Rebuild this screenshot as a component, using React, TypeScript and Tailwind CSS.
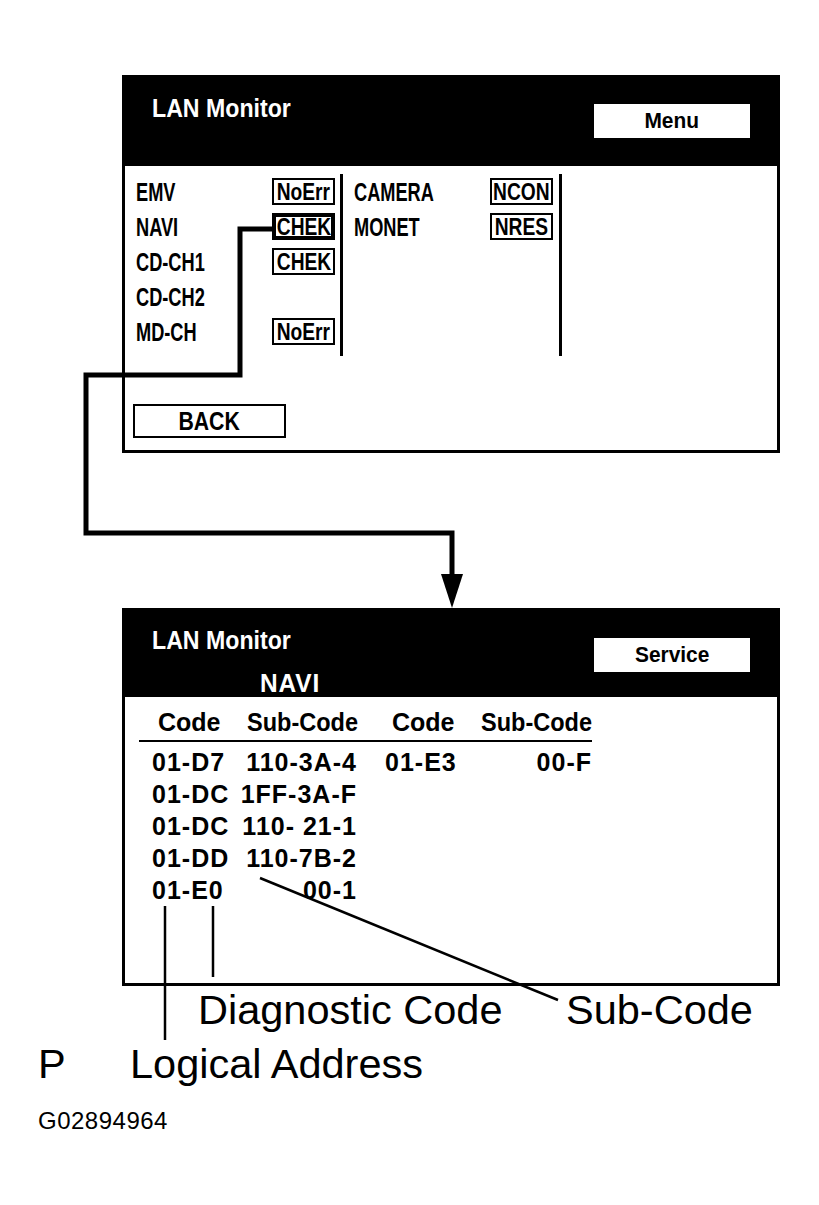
import clsx from 'clsx'
import type { ReactNode } from 'react'

const bold = "font-['Liberation_Sans',Arial,sans-serif] font-bold"
const plain = "font-['Liberation_Sans',Arial,sans-serif]"

type Unit = { name: string; status?: string; active?: boolean }

const leftUnits: Unit[] = [
  { name: 'EMV', status: 'NoErr' },
  { name: 'NAVI', status: 'CHEK', active: true },
  { name: 'CD-CH1', status: 'CHEK' },
  { name: 'CD-CH2' },
  { name: 'MD-CH', status: 'NoErr' },
]

const rightUnits: Unit[] = [
  { name: 'CAMERA', status: 'NCON' },
  { name: 'MONET', status: 'NRES' },
]

const codes = [
  ['01-D7', '110-3A-4', '01-E3', '00-F'],
  ['01-DC', '1FF-3A-F', '', ''],
  ['01-DC', '110- 21-1', '', ''],
  ['01-DD', '110-7B-2', '', ''],
  ['01-E0', '00-1', '', ''],
]

// the screen font is a condensed face; squeeze Liberation Sans to match
function Narrow({ children, className }: { children: ReactNode; className: string }) {
  return <span className={clsx('inline-block whitespace-nowrap', className)}>{children}</span>
}

function StatusBox({ unit }: { unit: Unit }) {
  if (!unit.status) return <div className="w-[63px] h-[27px]" />
  return (
    <div
      className={clsx(
        'w-[63px] h-[27px] flex items-center justify-center border-black text-[24px] leading-none',
        unit.active ? 'border-[4px]' : 'border-2'
      )}
    >
      <Narrow className="origin-center scale-x-[0.8]">{unit.status}</Narrow>
    </div>
  )
}

function UnitColumn({ units, width }: { units: Unit[]; width: string }) {
  return (
    <div className={clsx('flex flex-col', width)}>
      {units.map(u => (
        <div key={u.name} className="flex items-center h-[35px]">
          <span className="w-[136px] text-[26px] leading-none">
            <Narrow className="origin-left scale-x-[0.7]">{u.name}</Narrow>
          </span>
          <StatusBox unit={u} />
        </div>
      ))}
    </div>
  )
}

function Header({ button, sub }: { button: string; sub?: string }) {
  return (
    <div className={clsx('bg-black flex justify-between px-[27px]', sub ? 'h-[86px]' : 'h-[88px]')}>
      <div className={clsx('text-white text-[26px] leading-none', sub ? 'pt-[16px]' : 'pt-[17px]')}>
        <p>
          <Narrow className="origin-left scale-x-[0.89]">LAN Monitor</Narrow>
        </p>
        {sub && (
          <p className="mt-[17px] ml-[108px] tracking-[1px]">
            <Narrow className="origin-left scale-x-[0.94]">{sub}</Narrow>
          </p>
        )}
      </div>
      <div
        className={clsx(
          'w-[156px] h-[34px] bg-white flex items-center justify-center text-[22px] leading-none',
          sub ? 'mt-[27px]' : 'mt-[26px]'
        )}
      >
        <Narrow className="origin-center scale-x-[0.95]">{button}</Narrow>
      </div>
    </div>
  )
}

const cols = 'grid grid-cols-[101px_117px_113px_122px]'

export default function App() {
  return (
    <div className="relative w-[819px] h-[1205px] bg-white text-black overflow-hidden">
      <div className="pt-[75px]">
        <section className={clsx('ml-[122px] w-[658px] h-[378px] border-[3px] border-black flex flex-col', bold)}>
          <Header button="Menu" />
          <div className="flex-1 pl-[11px] pt-[8px]">
            <div className="flex">
              <UnitColumn units={leftUnits} width="w-[204px]" />
              <div className="w-[3px] h-[182px] bg-black" />
              <div className="pl-[11px] w-[216px]">
                <UnitColumn units={rightUnits} width="w-[205px]" />
              </div>
              <div className="w-[3px] h-[182px] bg-black" />
            </div>
            <div className="mt-[48px] ml-[-3px] w-[153px] h-[34px] border-2 border-black flex items-center justify-center text-[25px] leading-none">
              <Narrow className="origin-center scale-x-[0.85]">BACK</Narrow>
            </div>
          </div>
        </section>

        <section className={clsx('mt-[155px] ml-[122px] w-[658px] h-[378px] border-[3px] border-black flex flex-col', bold)}>
          <Header button="Service" sub="NAVI" />
          <div className="ml-[14px] w-[453px] pt-[13px] whitespace-nowrap">
            <div className={clsx(cols, 'text-[25px] leading-none pb-[5px] border-b-2 border-black')}>
              <span className="pl-[19px]">Code</span>
              <span className="text-right">
                <Narrow className="origin-right scale-x-[0.94]">Sub-Code</Narrow>
              </span>
              <span className="pl-[35px]">Code</span>
              <span className="text-right">
                <Narrow className="origin-right scale-x-[0.94]">Sub-Code</Narrow>
              </span>
            </div>
            <div className="mt-[4px]">
              {codes.map((r, i) => (
                <div key={i} className={clsx(cols, 'h-[32px] text-[25px] leading-[32px] tracking-[1px]')}>
                  <span className="pl-[13px]">{r[0]}</span>
                  <span className="text-right">{r[1]}</span>
                  <span className="pl-[28px]">{r[2]}</span>
                  <span className="text-right">{r[3]}</span>
                </div>
              ))}
            </div>
          </div>
        </section>

        <div className={clsx('text-[41.5px] leading-none', plain)}>
          <div className="flex mt-[3px] ml-[198px]">
            <span className="w-[368px]">Diagnostic Code</span>
            <span>Sub-Code</span>
          </div>
          <div className="flex mt-[12px] ml-[38px]">
            <span className="w-[92px]">P</span>
            <span>Logical Address</span>
          </div>
          <p className="mt-[25px] ml-[38px] text-[24px] tracking-[0.5px]">G02894964</p>
        </div>
      </div>

      <svg className="absolute inset-0 pointer-events-none" width="819" height="1205" viewBox="0 0 819 1205">
        <polyline
          points="272,229 240,229 240,375 86,375 86,533 452,533 452,578"
          fill="none"
          stroke="#000"
          strokeWidth="5"
          strokeLinejoin="miter"
        />
        <polygon points="441,574 463,574 452,608" fill="#000" />
        <line x1="165" y1="906" x2="165" y2="1040" stroke="#000" strokeWidth="2.5" />
        <line x1="213" y1="906" x2="213" y2="977" stroke="#000" strokeWidth="2.5" />
        <line x1="260" y1="878" x2="558" y2="1000" stroke="#000" strokeWidth="2.5" />
      </svg>
    </div>
  )
}
